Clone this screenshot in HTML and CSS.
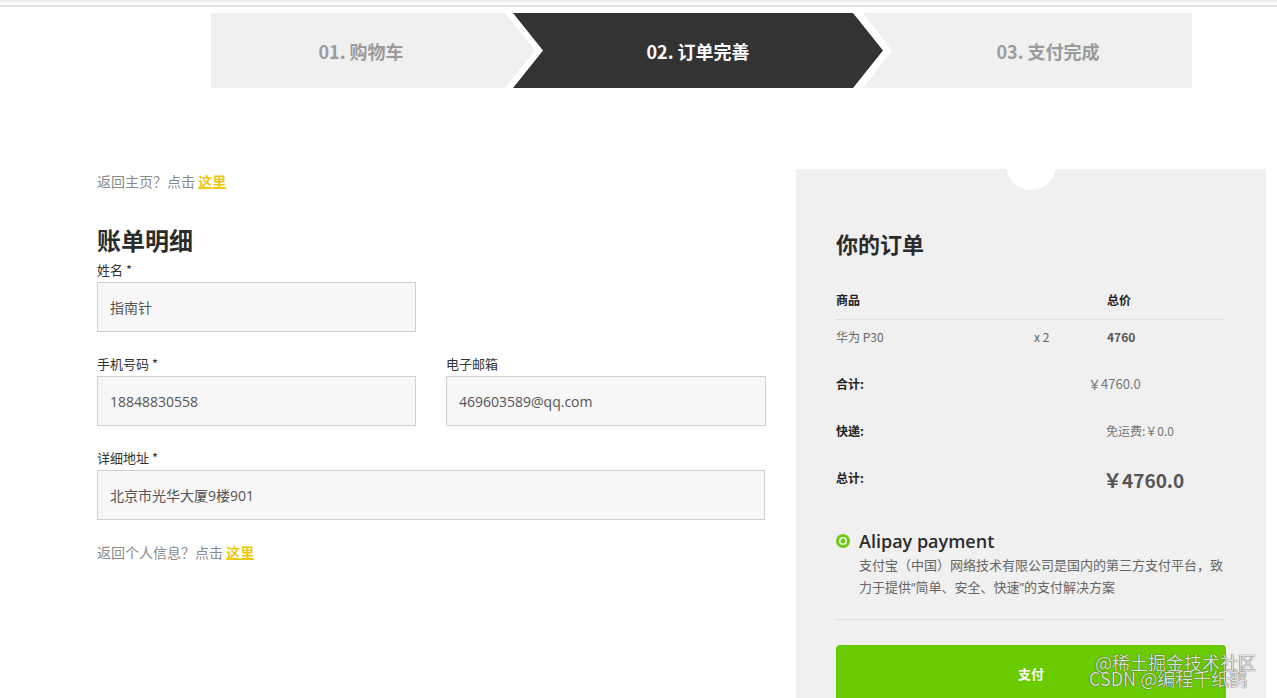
FILE: index.html
```html
<!DOCTYPE html>
<html lang="zh-CN">
<head>
<meta charset="utf-8">
<title>订单完善</title>
<link rel="stylesheet" href="styles.css">
</head>
<body>
<div class="topstrip"></div>
<div class="topline"></div>

<div class="steps">
  <div class="step step-first">01. 购物车</div>
  <div class="step step-active">02. 订单完善</div>
  <div class="step step-last">03. 支付完成</div>
</div>

<div class="main">
  <div class="billing">
    <p class="hint">返回主页？点击 <a class="hint-link" href="#">这里</a></p>
    <h2 class="billing-title">账单明细</h2>

    <div class="field">
      <label class="field-label">姓名 *</label>
      <div class="input input-half">指南针</div>
    </div>

    <div class="field-row">
      <div class="field">
        <label class="field-label">手机号码 *</label>
        <div class="input">18848830558</div>
      </div>
      <div class="field">
        <label class="field-label">电子邮箱</label>
        <div class="input">469603589@qq.com</div>
      </div>
    </div>

    <div class="field">
      <label class="field-label">详细地址 *</label>
      <div class="input">北京市光华大厦9楼901</div>
    </div>

    <p class="hint hint-bottom">返回个人信息？点击 <a class="hint-link" href="#">这里</a></p>
  </div>

  <div class="order">
    <div class="order-notch"></div>
    <h2 class="order-title">你的订单</h2>

    <div class="order-table">
      <div class="ot-head">
        <span>商品</span><span></span><span>总价</span>
      </div>
      <div class="ot-row">
        <span class="ot-name">华为 P30</span><span class="ot-qty">x 2</span><span class="ot-price">4760</span>
      </div>
    </div>

    <div class="sum-row">
      <span class="sum-label">合计:</span>
      <span class="sum-value sum-sub">￥4760.0</span>
    </div>
    <div class="sum-row">
      <span class="sum-label">快递:</span>
      <span class="sum-value sum-ship">免运费:￥0.0</span>
    </div>
    <div class="sum-row">
      <span class="sum-label">总计:</span>
      <span class="sum-value sum-total">￥4760.0</span>
    </div>

    <div class="pay-method">
      <span class="radio"></span>
      <span class="pay-name">Alipay payment</span>
    </div>
    <p class="pay-desc">支付宝（中国）网络技术有限公司是国内的第三方支付平台，致力于提供“简单、安全、快速”的支付解决方案</p>

    <div class="sep"></div>

    <button class="pay-btn">支付</button>
  </div>
</div>

<div class="watermark">
  <span class="wm-line">@稀土掘金技术社区</span>
  <span class="wm-line wm-line2">CSDN @编程千纸鹤</span>
</div>
</body>
</html>
```

FILE: styles.css
```css
* { box-sizing: border-box; }

html, body {
  margin: 0;
  padding: 0;
  background: #fff;
  font-family: "Open Sans", "Noto Sans CJK SC", sans-serif;
  color: #333;
}

body { position: relative; overflow: hidden; height: 698px; }

.topstrip {
  height: 2px;
  background: #efefef;
}

.topline {
  height: 2px;
  margin-top: 3px;
  background: #e2e2e2;
}

/* ---------- steps ---------- */
.steps {
  display: flex;
  margin: 6px 0 0 211px;
  height: 75px;
}

.step {
  height: 75px;
  display: flex;
  align-items: center;
  justify-content: center;
  font-family: "Noto Sans CJK SC", sans-serif;
  font-weight: 700;
  font-size: 18px;
  color: #9b9b9b;
  background: #f0f0f0;
}

.step-first {
  width: 324px;
  padding-right: 24px;
  clip-path: polygon(0 0, 294px 0, 100% 50%, 294px 100%, 0 100%);
}

.step-active {
  width: 370px;
  margin-left: -22px;
  background: #333;
  color: #fff;
  clip-path: polygon(0 0, 340px 0, 100% 50%, 340px 100%, 0 100%, 30px 50%);
}

.step-last {
  width: 329px;
  margin-left: -20px;
  padding-left: 41px;
  clip-path: polygon(0 0, 100% 0, 100% 100%, 0 100%, 29px 50%);
}

/* ---------- main ---------- */
.main {
  display: flex;
  gap: 31px;
  margin-top: 81px;
  padding-left: 97px;
}

.billing {
  width: 668px;
  padding-top: 2px;
}

.hint {
  margin: 0;
  font-size: 14px;
  line-height: 20px;
  color: #8a8a8a;
  font-family: "Noto Sans CJK SC", sans-serif;
}

.hint-link {
  color: #eec80c;
  font-weight: 700;
  text-decoration: underline;
}

.hint-bottom { margin-top: 22px; }

.billing-title {
  margin: 34px 0 0;
  font-size: 24px;
  line-height: 30px;
  font-weight: 700;
  color: #2b2b2b;
  font-family: "Noto Sans CJK SC", sans-serif;
}

.field { display: flex; flex-direction: column; }

.billing-title + .field { margin-top: 6px; }

.field-row {
  display: grid;
  grid-template-columns: 319px 320px;
  column-gap: 30px;
  margin-top: 23px;
}

.field-row + .field { margin-top: 23px; }

.field-label {
  font-size: 13px;
  line-height: 18px;
  color: #333;
  font-family: "Noto Sans CJK SC", sans-serif;
}

.input {
  margin-top: 3px;
  height: 50px;
  display: flex;
  align-items: center;
  padding-left: 12px;
  background: #f7f7f7;
  border: 1px solid #cfcfcf;
  font-size: 14px;
  color: #555;
}

.input-half { width: 319px; }

/* ---------- order ---------- */
.order {
  position: relative;
  width: 470px;
  background: #f0f0f0;
  padding: 59px 40px 40px;
}

.order-notch {
  position: absolute;
  top: -29px;
  left: 210px;
  width: 50px;
  height: 50px;
  border-radius: 50%;
  background: #fff;
}

.order-title {
  margin: 0;
  font-size: 22px;
  line-height: 30px;
  font-weight: 700;
  color: #2b2b2b;
  font-family: "Noto Sans CJK SC", sans-serif;
}

.order-table {
  margin-top: 32px;
  width: 388px;
  font-family: "Noto Sans CJK SC", sans-serif;
  font-size: 12px;
}

.ot-head, .ot-row {
  display: grid;
  grid-template-columns: 198px 73px 1fr;
  line-height: 20px;
}

.ot-head {
  font-weight: 700;
  color: #222;
  padding-bottom: 9px;
  border-bottom: 1px dotted #d4d4d4;
}

.ot-row {
  padding-top: 7px;
  color: #666;
}

.ot-price { font-weight: 700; color: #555; }

.sum-row {
  display: grid;
  grid-template-columns: 252px 1fr;
  align-items: start;
  margin-top: 27px;
  font-family: "Noto Sans CJK SC", sans-serif;
}

.sum-row + .sum-row { margin-top: 27px; }

.sum-label {
  font-size: 12px;
  line-height: 16px;
  font-weight: 700;
  color: #222;
  margin-top: 2px;
}

.sum-value {
  font-size: 13px;
  line-height: 20px;
  color: #777;
}

.sum-ship { padding-left: 18px; font-size: 12px; }

.sum-total {
  padding-left: 15px;
  font-size: 19px;
  line-height: 24px;
  font-weight: 700;
  color: #555;
}

.sum-row:last-of-type .sum-label { margin-top: 0; }

.pay-method {
  display: flex;
  align-items: center;
  gap: 9px;
  margin-top: 36px;
  height: 26px;
}

.radio {
  width: 14px;
  height: 14px;
  border-radius: 50%;
  border: 3px solid #6dcc12;
  background: radial-gradient(circle, #6dcc12 0 2.2px, #f0f0f0 2.8px);
}

.pay-name {
  font-size: 18px;
  font-weight: 600;
  color: #2b2b2b;
}

.pay-desc {
  margin: 0 0 0 23px;
  font-size: 13px;
  line-height: 22px;
  color: #666;
  font-family: "Open Sans", "Noto Sans CJK SC", sans-serif;
}

.sep {
  margin-top: 21px;
  width: 388px;
  height: 1px;
  background: #dcdcdc;
}

.pay-btn {
  display: block;
  width: 390px;
  height: 56px;
  margin-top: 25px;
  border: none;
  border-radius: 4px;
  background: #6acc00;
  color: #fff;
  font-size: 13px;
  font-weight: 700;
  font-family: "Noto Sans CJK SC", sans-serif;
}

/* ---------- watermark ---------- */
.watermark {
  position: absolute;
  left: 1089px;
  top: 654px;
  display: flex;
  flex-direction: column;
  font-family: "Noto Sans CJK SC", sans-serif;
  font-size: 18px;
  line-height: 16px;
  color: rgba(255, 255, 255, 0.85);
  text-shadow: 0 0 1px rgba(0, 0, 0, 0.55), 0 0 1px rgba(0, 0, 0, 0.55);
  pointer-events: none;
}

.wm-line { padding-left: 6px; }
.wm-line2 { padding-left: 0; }
```
